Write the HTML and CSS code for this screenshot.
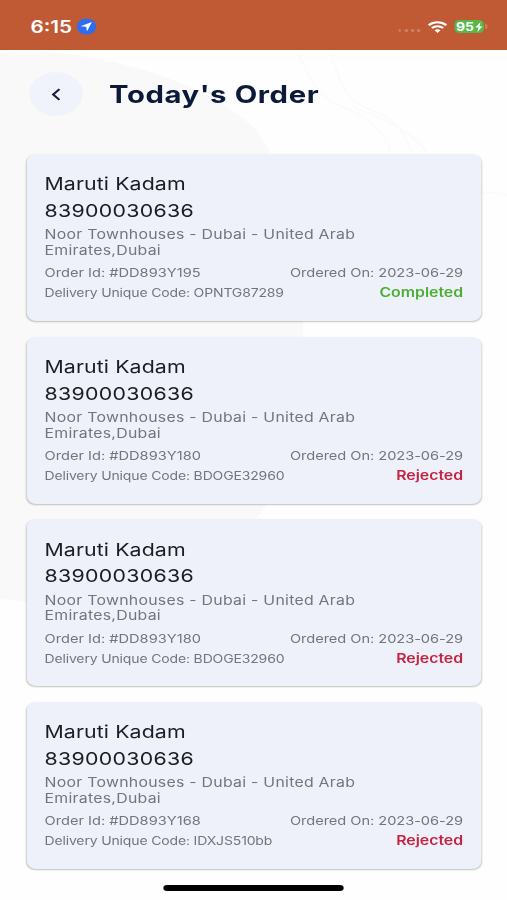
FILE: index.html
```
<!DOCTYPE html>
<html lang="en">
<head>
    <meta charset="UTF-8">
    <meta name="viewport" content="width=device-width, initial-scale=1.0">
    <title>Today's Order</title>
    <link rel="stylesheet" href="styles.css">
</head>
<body>
    <div class="screen">
        <svg class="backdrop" viewBox="0 0 507 900" preserveAspectRatio="none">
            <path fill="#f9f9f9" d="M0 53C70 45 195 72 254 128C295 180 304 260 303 328C302 400 290 480 257 518C215 585 110 606 25 602Q10 600 0 599Z"/>
            <g fill="none" stroke="#fafafb" stroke-width="1.5">
                <path d="M298 53C310 78 316 96 340 106C365 114 385 130 391 154"/>
                <path d="M330 53C340 75 340 96 364 107C392 116 405 130 412 154"/>
                <path d="M352 106C385 120 418 134 427 154M482 193Q494 191 507 195"/>
            </g>
        </svg>

        <div class="status-bar">
            <span class="time">6:15</span>
            <svg class="location" viewBox="0 0 16 16">
                <circle cx="8" cy="8" r="8" fill="#2f6df0"/>
                <path d="M12.4 3.6L3.2 7.7L7.7 8.3L8.4 12.8Z" fill="#fff"/>
            </svg>
            <span class="spacer"></span>
            <span class="signal"><i></i><i></i><i></i><i></i></span>
            <svg class="wifi" viewBox="0 0 16 12">
                <g fill="none" stroke="#fff" stroke-width="2.1">
                    <path d="M.8 4.2C4.8.3 11.2.3 15.2 4.2"/>
                    <path d="M3.4 7C6 4.6 10 4.6 12.6 7"/>
                </g>
                <path d="M8 12L5.5 9.2Q8 7.2 10.5 9.2Z" fill="#fff"/>
            </svg>
            <span class="battery">95<svg viewBox="0 0 6 10"><path d="M4.3 0L0 5.6H2.5L1.7 10L6 4.2H3.5Z" fill="#fff"/></svg></span>
        </div>

        <header class="header">
            <button class="back" aria-label="Back">
                <svg viewBox="0 0 8 14"><path d="M7 1.2L1.4 7L7 12.8" fill="none" stroke="#17213b" stroke-width="2"/></svg>
            </button>
            <h1>Today's Order</h1>
        </header>

        <main class="orders">
            <article class="card">
                <div class="name">Maruti Kadam</div>
                <div class="phone">83900030636</div>
                <p class="address">Noor Townhouses - Dubai - United Arab Emirates,Dubai</p>
                <div class="row">
                    <span class="order-id">Order Id: #DD893Y195</span>
                    <span class="date">Ordered On: 2023-06-29</span>
                </div>
                <div class="row">
                    <span class="code">Delivery Unique Code: OPNTG87289</span>
                    <span class="status completed">Completed</span>
                </div>
            </article>
            <article class="card">
                <div class="name">Maruti Kadam</div>
                <div class="phone">83900030636</div>
                <p class="address">Noor Townhouses - Dubai - United Arab Emirates,Dubai</p>
                <div class="row">
                    <span class="order-id">Order Id: #DD893Y180</span>
                    <span class="date">Ordered On: 2023-06-29</span>
                </div>
                <div class="row">
                    <span class="code">Delivery Unique Code: BDOGE32960</span>
                    <span class="status rejected">Rejected</span>
                </div>
            </article>
            <article class="card">
                <div class="name">Maruti Kadam</div>
                <div class="phone">83900030636</div>
                <p class="address">Noor Townhouses - Dubai - United Arab Emirates,Dubai</p>
                <div class="row">
                    <span class="order-id">Order Id: #DD893Y180</span>
                    <span class="date">Ordered On: 2023-06-29</span>
                </div>
                <div class="row">
                    <span class="code">Delivery Unique Code: BDOGE32960</span>
                    <span class="status rejected">Rejected</span>
                </div>
            </article>
            <article class="card">
                <div class="name">Maruti Kadam</div>
                <div class="phone">83900030636</div>
                <p class="address">Noor Townhouses - Dubai - United Arab Emirates,Dubai</p>
                <div class="row">
                    <span class="order-id">Order Id: #DD893Y168</span>
                    <span class="date">Ordered On: 2023-06-29</span>
                </div>
                <div class="row">
                    <span class="code">Delivery Unique Code: IDXJS510bb</span>
                    <span class="status rejected">Rejected</span>
                </div>
            </article>
        </main>

        <div class="home-indicator"></div>
    </div>
</body>
</html>
```
FILE: styles.css
```
:root {
    --bar-color: #c05a35;
    --card-color: #eef1fa;
    --title-color: #0b1a38;
    --muted-color: #74757c;
    --completed-color: #4caf32;
    --rejected-color: #c52440;
}

* {
    margin: 0;
    padding: 0;
    box-sizing: border-box;
}

body {
    width: 507px;
    height: 900px;
    overflow: hidden;
    background: #fefefe;
    font-family: Inter, sans-serif;
}

/* 416px phone layout widened to fill the 507px window */
.screen {
    position: relative;
    width: 416px;
    height: 900px;
    transform: scaleX(1.21875);
    transform-origin: 0 0;
}

.backdrop {
    position: absolute;
    inset: 0;
    width: 100%;
    height: 100%;
    z-index: -1;
}

/* Status bar */
.status-bar {
    height: 50px;
    padding: 3px 19px 0 25px;
    display: flex;
    align-items: center;
    background: var(--bar-color);
    color: #fff;
}

.time {
    width: 34px;
    font-size: 17px;
    font-weight: 600;
    white-space: nowrap;
}

.location {
    width: 16px;
    height: 17px;
    margin-left: 4px;
}

.spacer {
    flex: 1;
}

.signal {
    display: flex;
    gap: 2.6px;
    margin: 7px 6px 0 0;
}

.signal i {
    width: 2.6px;
    height: 3px;
    border-radius: 50%;
    background: #d07f60;
}

.wifi {
    width: 16px;
    height: 12px;
    margin-right: 6px;
}

.battery {
    position: relative;
    width: 24px;
    height: 13px;
    display: flex;
    align-items: center;
    justify-content: center;
    gap: 1px;
    border-radius: 4px;
    background: #55b948;
    font-size: 11.5px;
    font-weight: 700;
}

.battery svg {
    width: 6px;
    height: 10px;
}

.battery::after {
    content: '';
    position: absolute;
    right: -3px;
    top: 4px;
    width: 2px;
    height: 5px;
    border-radius: 0 2px 2px 0;
    background: #d07f60;
}

/* Header */
.header {
    height: 104px;
    padding: 22px 0 0 23.5px;
    display: flex;
    align-items: flex-start;
}

.back {
    width: 44px;
    height: 44px;
    display: flex;
    align-items: center;
    justify-content: center;
    border: none;
    border-radius: 50%;
    background: #f0f3fc;
}

.back svg {
    width: 8px;
    height: 13px;
}

h1 {
    margin-left: 22px;
    color: var(--title-color);
    font-size: 24px;
    font-weight: 700;
    line-height: 46px;
    letter-spacing: 0.5px;
}

/* Order cards */
.orders {
    display: flex;
    flex-direction: column;
    gap: 15.7px;
    padding: 0 21px 0 21.5px;
}

.card {
    height: 167px;
    padding: 17.4px 15px 0 15px;
    border-radius: 8px;
    background: var(--card-color);
    box-shadow: 0 1px 1.5px rgba(0, 0, 0, 0.24);
}

.name,
.phone {
    color: #1c1d22;
    font-size: 17.5px;
    line-height: 26.5px;
    letter-spacing: 0.25px;
}

.name {
    letter-spacing: 0.08px;
}

.address {
    width: 270px;
    margin: 3px 0 7px;
    color: var(--muted-color);
    font-size: 13px;
    line-height: 15.5px;
    letter-spacing: 0.22px;
}

.row {
    height: 20px;
    display: flex;
    justify-content: space-between;
    color: var(--muted-color);
    font-size: 12px;
    line-height: 16px;
    white-space: nowrap;
}

.date {
    letter-spacing: -0.04px;
}

.code {
    font-size: 11.5px;
    letter-spacing: -0.13px;
}

.status {
    font-size: 13px;
    font-weight: 600;
    line-height: 14px;
}

.completed {
    color: var(--completed-color);
}

.rejected {
    color: var(--rejected-color);
}

.home-indicator {
    width: 148px;
    height: 6px;
    margin: 16px auto 0;
    border-radius: 3px;
    background: #000;
}
```
